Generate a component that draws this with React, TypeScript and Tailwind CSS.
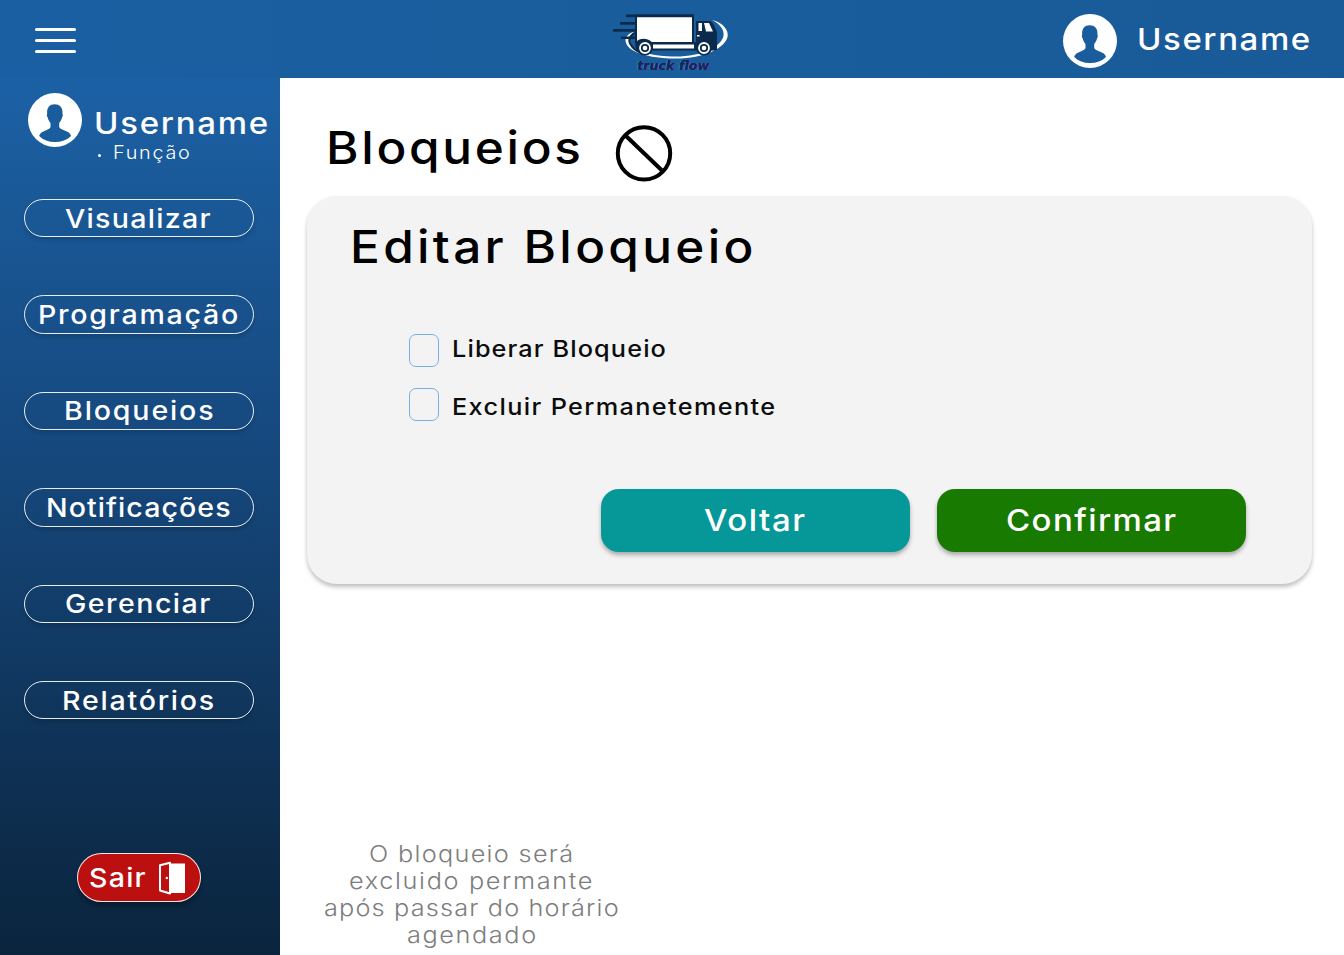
import React from "react";

function Avatar() {
  return (
    <svg viewBox="0 0 54 54" className="block size-[54px] shrink-0">
      <circle cx="27" cy="27" r="27" fill="#fff" />
      <path
        fill="#1a5d9d"
        d="M26.700 11.200C31.600 11.200 34.500 14.200 34.500 19.400L34.400 20.800C35.100 21.400 34.900 23.600 34 24.600C33.600 26.600 32.600 28.400 31.200 30V34C32 36.200 36 37.200 38.800 38.400C41.200 39.400 42.700 41 43 43C39 47 33.500 49 27 49C20.500 49 15.200 47 11.200 43C11.500 41 13 39.400 15.400 38.400C18.200 37.200 21.700 36.200 22.500 34V30C21.100 28.400 20.100 26.600 19.700 24.600C18.800 23.600 18.600 21.400 19.200 20.800L19.100 19.400C19 14.600 21.700 11.200 26.700 11.200Z"
      />
    </svg>
  );
}

function Logo() {
  return (
    <svg viewBox="0 0 140 78" className="block h-[78px] w-[140px]">
      <path
        fill="#fff"
        d="M112 20C124 23 129 31 127.5 37C125 48 104 58.500 76 58.500C48 58.500 27 52 25.500 41C25 37 29 33 35 31.500C30 35 28.500 38 29 41C31 51 52 56.500 76 56.500C102 56.500 121 47 123.500 36C124.500 30 120 24 112 20Z"
      />
      <path
        d="M35 33C29 36 28 41 31 45C33 49 37 51 41 53"
        fill="none"
        stroke="#0b2b4c"
        strokeWidth="2"
      />
      <g fill="#0b2b4c">
        <rect x="26" y="14.500" width="68" height="2.700" />
        <rect x="20" y="22" width="16" height="2.700" />
        <rect x="13" y="29" width="23" height="2.700" />
        <rect x="21" y="36.500" width="15" height="2.500" />
        <path d="M35 14.500H94V43H35Z" />
        <path d="M96 21H110.500C113 22 115.500 28 117 32V50H111L104 43L96 46Z" />
        <path d="M35 42H116V50.500H36Z" />
        <circle cx="45" cy="47.500" r="8" />
        <circle cx="104" cy="47.500" r="8" />
      </g>
      <path d="M37 17.300H92V42H52C47 38 41 38 37 41Z" fill="#fff" />
      <rect x="53" y="44.500" width="41" height="4" fill="#fff" />
      <path d="M98.500 23H102V31H98.500ZM104 23H109L113 31.500H106Z" fill="#fff" />
      <rect x="97" y="35" width="2.500" height="1.500" fill="#fff" />
      <g fill="#0b2b4c" stroke="#fff" strokeWidth="1.800">
        <circle cx="45" cy="48" r="5" />
        <circle cx="104" cy="48" r="5" />
      </g>
      <circle cx="45" cy="48" r="2.300" fill="#fff" />
      <circle cx="104" cy="48" r="2.300" fill="#fff" />
      <g fontFamily="DejaVu Sans, sans-serif" fontSize="12" fontStyle="italic" fontWeight="700">
        <text x="36" y="69.500" textLength="72" lengthAdjust="spacingAndGlyphs" fill="#168fb4">truck flow</text>
        <text x="37.800" y="69.500" textLength="72" lengthAdjust="spacingAndGlyphs" fill="#7a22a8">truck flow</text>
        <text x="37" y="69.500" textLength="72" lengthAdjust="spacingAndGlyphs" fill="#0d2a55">truck flow</text>
      </g>
    </svg>
  );
}

const navItems = [
  { label: "Visualizar", pad: "pl-10", text: "tracking-[1.16px]" },
  { label: "Programação", pad: "pl-[13px]", text: "tracking-[1.58px]" },
  { label: "Bloqueios", pad: "pl-[39px]", text: "tracking-[1.68px]" },
  { label: "Notificações", pad: "pl-[21px]", text: "tracking-[0.96px]" },
  { label: "Gerenciar", pad: "pl-10", text: "tracking-[1.31px]" },
  { label: "Relatórios", pad: "pl-[37px]", text: "tracking-[1.6px]" },
];

function Wide({ className = "", children }: { className?: string; children: React.ReactNode }) {
  return (
    <span className={`block w-max origin-left scale-x-110 whitespace-nowrap ${className}`}>{children}</span>
  );
}

function Sidebar() {
  return (
    <aside className="flex w-[279.5px] shrink-0 flex-col bg-linear-to-b from-[#1c61a5] via-[#15467a] via-46% to-[#0a243d] text-white">
      <div className="flex h-[121px] pt-[15px] pl-7">
        <Avatar />
        <div className="flex flex-col pt-3.5 pl-3">
          <Wide className="text-[30px] leading-8 font-medium tracking-[1.58px]">Username</Wide>
          <div className="flex items-center pl-0.5 text-lg leading-7 font-light">
            <span className="mt-1 mr-3 ml-[2px] size-[3px] rounded-full bg-white" />
            <Wide className="tracking-[1.56px]">Função</Wide>
          </div>
        </div>
      </div>
      <nav className="flex flex-col gap-[58px] pl-6">
        {navItems.map((item) => (
          <button
            key={item.label}
            className={`flex h-[38.4px] w-[229.5px] items-center rounded-full border border-white/90 pt-px text-[26px] leading-9 font-medium shadow-[0_3px_4px_rgba(0,0,0,0.14)] ${item.pad}`}
          >
            <Wide className={item.text}>{item.label}</Wide>
          </button>
        ))}
      </nav>
      <button className="mt-auto mb-[53px] ml-[77px] flex h-[49px] w-[124px] items-center rounded-full border border-white/90 bg-[#bc0f10] pl-[11px] text-[26px] font-medium shadow-[0_4px_4px_rgba(0,0,0,0.3)]">
        <span className="w-[69px]">
          <Wide className="tracking-[1.1px]">Sair</Wide>
        </span>
        <svg viewBox="0 0 28 34" className="h-[34px] w-7">
          <path d="M11 2.500H27V32H11Z" fill="#fff" />
          <path d="M2 4.200L12 1.800V32.500L2 29.500Z" fill="#bc0f10" stroke="#fff" strokeWidth="2" strokeLinejoin="round" />
          <circle cx="8.800" cy="17" r="1.200" fill="#fff" />
        </svg>
      </button>
    </aside>
  );
}

function Option({ label, text }: { label: string; text: string }) {
  return (
    <label className="flex items-start">
      <input
        type="checkbox"
        className="block h-[33px] w-[30px] appearance-none rounded-[7px] border border-[#7ab0e4]"
      />
      <Wide className={`ml-[12.5px] text-[23px] leading-[30px] font-medium text-[#0c0c0c] ${text}`}>{label}</Wide>
    </label>
  );
}

export default function App() {
  return (
    <div className="flex h-[955px] w-[1344px] flex-col overflow-hidden bg-white font-['Inter',sans-serif]">
      <header className="flex h-[78px] shrink-0 justify-between bg-linear-to-r from-[#1a5fa1] to-[#195b98] text-white">
        <button className="flex w-[612px] flex-col gap-2 pt-7 pl-[34.5px]">
          <span className="h-[3px] w-[41px] rounded-full bg-white" />
          <span className="h-[3px] w-[41px] rounded-full bg-white" />
          <span className="h-[3px] w-[41px] rounded-full bg-white" />
        </button>
        <div className="-ml-3">
          <Logo />
        </div>
        <div className="flex flex-1 pt-3.5 pl-[322.5px]">
          <Avatar />
          <Wide className="ml-5 pt-[9px] text-[30px] leading-8 font-medium tracking-[1.45px]">Username</Wide>
        </div>
      </header>
      <div className="flex flex-1">
        <Sidebar />
        <main className="flex flex-1 flex-col pl-[27.5px]">
          <div className="flex h-[118px] pl-[18.5px]">
            <h1 className="w-[289.5px] pt-[45px] text-[45px] leading-[50px] font-medium text-black">
              <Wide className="tracking-[2.46px]">Bloqueios</Wide>
            </h1>
            <svg viewBox="0 0 58 58" className="mt-[46px] size-[58px]" fill="none" stroke="#000" strokeWidth="4">
              <circle cx="29" cy="29.400" r="26.200" />
              <path d="M10.500 11.500L47 46.500" />
            </svg>
          </div>
          <section className="h-[388px] w-[1005px] rounded-[30px] bg-[#f3f3f3] shadow-[0_3px_4px_rgba(0,0,0,0.25)]">
            <h2 className="pt-[26px] pl-[43px] text-[45px] leading-[50px] font-medium text-black">
              <Wide className="tracking-[3px]">Editar Bloqueio</Wide>
            </h2>
            <div className="mt-[61.5px] flex flex-col gap-[21px] pl-[102px]">
              <Option label="Liberar Bloqueio" text="tracking-[1px]" />
              <Option label="Excluir Permanetemente" text="pt-1 tracking-[1.22px]" />
            </div>
            <div className="mt-[67px] flex gap-[27px] pl-[294px]">
              <button className="flex h-[63px] w-[309px] items-center rounded-[18px] bg-[#069798] pl-[103px] text-[30px] font-medium text-white shadow-[0_3px_4px_rgba(0,0,0,0.3)]">
                <Wide className="tracking-[1.42px]">Voltar</Wide>
              </button>
              <button className="flex h-[63px] w-[309px] items-center rounded-[18px] bg-[#187a00] pl-[69px] text-[30px] font-medium text-white shadow-[0_3px_4px_rgba(0,0,0,0.3)]">
                <Wide className="tracking-[1.27px]">Confirmar</Wide>
              </button>
            </div>
          </section>
          <div className="mt-auto mb-[5.5px] flex flex-col pl-[17px] text-[23px] leading-[27.2px] font-light text-[#7d7d7d]">
            <Wide className="ml-[45px] tracking-[1.18px]">O bloqueio será</Wide>
            <Wide className="ml-[25px] tracking-[1.49px]">excluido permante</Wide>
            <Wide className="tracking-[1.05px]">após passar do horário</Wide>
            <Wide className="ml-[83px] tracking-[1.44px]">agendado</Wide>
          </div>
        </main>
      </div>
    </div>
  );
}
